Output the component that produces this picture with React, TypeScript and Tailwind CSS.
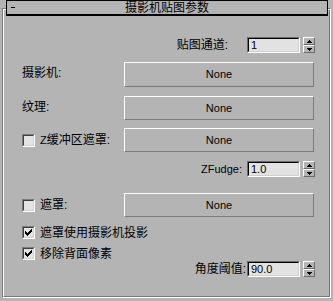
import React from "react";

const latin = "text-[11px]";

// classic 7x7 check mark, row by row
const CHECK = ["......#", ".....##", "#...###", "##.###.", "#####..", ".###...", "..#...."];

function Btn({ label = "None" }: { label?: string }) {
  return (
    <div className="w-[190px] h-full border-t border-l border-white border-r border-b border-r-[#7a7a7a] border-b-[#7a7a7a] flex items-center justify-center">
      <span className={latin}>{label}</span>
    </div>
  );
}

function CheckBox({ checked = false }: { checked?: boolean }) {
  return (
    <div className="w-[13px] h-[13px] shrink-0 border border-t-[#7a7a7a] border-l-[#7a7a7a] border-r-white border-b-white">
      <div className="w-full h-full border border-t-[#404040] border-l-[#404040] border-r-[#d0d0d0] border-b-[#d0d0d0] bg-[#e4e4e4] flex items-center justify-center">
        {checked && (
          <svg width="7" height="7" viewBox="0 0 7 7" shapeRendering="crispEdges">
            {CHECK.map((row, y) =>
              row.split("").map((c, x) =>
                c === "#" ? <rect key={`${x}-${y}`} x={x} y={y} width="1" height="1" fill="#000" /> : null
              )
            )}
          </svg>
        )}
      </div>
    </div>
  );
}

function Spinner({ value }: { value: string }) {
  return (
    <div className="flex h-[16px]">
      <div className="w-[53px] h-full border border-t-[#6a6a6a] border-l-[#6a6a6a] border-r-white border-b-white">
        <div className="w-full h-full border border-t-black border-l-black border-r-[#d0d0d0] border-b-[#d0d0d0] bg-[#e2e2e2] flex items-center pl-[2px]">
          <span className={`${latin} leading-none`}>{value}</span>
        </div>
      </div>
      <div className="ml-[3px] w-[12px] h-full flex flex-col">
        <div className="h-[8px] border border-t-white border-l-white border-r-[#6a6a6a] border-b-[#6a6a6a] flex items-center justify-center">
          <svg width="5" height="3" viewBox="0 0 5 3">
            <path d="M2 0h1v1h1v1h1v1h-5v-1h1v-1h1z" fill="#000" />
          </svg>
        </div>
        <div className="h-[8px] border border-t-white border-l-white border-r-[#6a6a6a] border-b-[#6a6a6a] flex items-center justify-center">
          <svg width="5" height="3" viewBox="0 0 5 3">
            <path d="M0 0h5v1h-1v1h-1v1h-1v-1h-1v-1h-1z" fill="#000" />
          </svg>
        </div>
      </div>
    </div>
  );
}

export default function App() {
  return (
    <div
      className="w-[333px] h-[301px] bg-[#b4b4b4] text-black text-[12px] overflow-hidden"
      style={{ fontFamily: '"Liberation Sans", "Noto Sans CJK SC", sans-serif' }}
    >
      {/* rollout title */}
      <div className="relative z-10 ml-[6px] w-[322px] h-[16px] border border-black border-b-2 bg-[#b4b4b4] flex items-center">
        <div className="absolute left-[4px] top-[6px] w-[4px] h-[1px] bg-black" />
        <div className="flex-1 text-center leading-none">摄影机贴图参数</div>
      </div>

      {/* frame */}
      <div className="-mt-[8px] ml-[2px] w-[329px] h-[290px] border border-t-[#7a7a7a] border-l-[#7a7a7a] border-r-white border-b-white">
        <div className="w-full h-full border border-t-white border-l-white border-r-[#7a7a7a] border-b-[#7a7a7a] pl-[18px] pr-[14px] flex flex-col">
          <div className="mt-[27px] h-[16px] flex items-center justify-end">
            <span className="mr-[19px]">贴图通道:</span>
            <Spinner value="1" />
          </div>

          <div className="mt-[9px] h-[25px] flex items-center pr-[1px]">
            <span className="w-[102px] -mt-[3px]">摄影机:</span>
            <Btn />
          </div>

          <div className="mt-[9px] h-[24px] flex items-center pr-[1px]">
            <span className="w-[102px] -mt-[2px]">纹理:</span>
            <Btn />
          </div>

          <div className="mt-[8px] h-[24px] flex items-center pr-[1px]">
            <div className="w-[102px] flex items-center">
              <CheckBox />
              <span className="ml-[5px]">
                <span className={latin}>Z</span>缓冲区遮罩:
              </span>
            </div>
            <Btn />
          </div>

          <div className="mt-[9px] h-[16px] flex items-center justify-end">
            <span className={`${latin} mr-[5px]`}>ZFudge:</span>
            <Spinner value="1.0" />
          </div>

          <div className="mt-[16px] h-[24px] flex items-center pr-[1px]">
            <div className="w-[102px] flex items-center">
              <CheckBox />
              <span className="ml-[5px]">遮罩:</span>
            </div>
            <Btn />
          </div>

          <div className="mt-[9px] h-[13px] flex items-center">
            <CheckBox checked />
            <span className="ml-[5px]">遮罩使用摄影机投影</span>
          </div>

          <div className="mt-[8px] h-[13px] flex items-center">
            <CheckBox checked />
            <span className="ml-[5px]">移除背面像素</span>
          </div>

          <div className="mt-[1px] h-[16px] flex items-center justify-end">
            <span className="mr-[1px]">角度阈值:</span>
            <Spinner value="90.0" />
          </div>
        </div>
      </div>
    </div>
  );
}
